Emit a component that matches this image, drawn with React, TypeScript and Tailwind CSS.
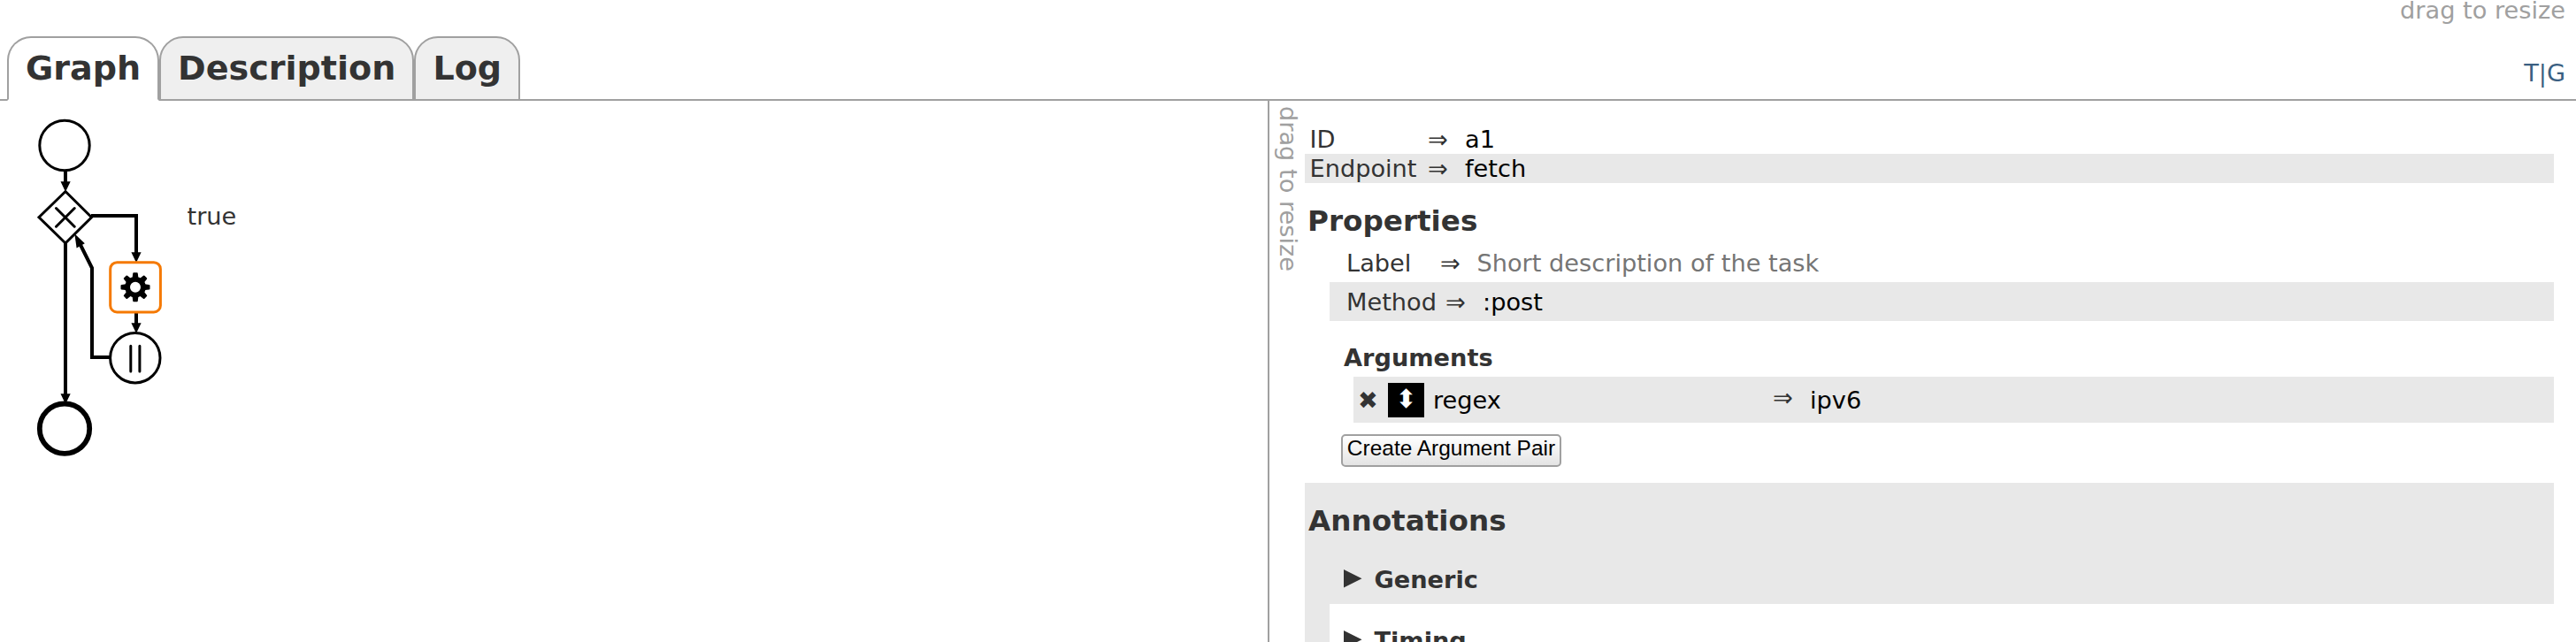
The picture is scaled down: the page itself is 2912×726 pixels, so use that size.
import React from "react";

const TEETH = [0, 45, 90, 135, 180, 225, 270, 315];

function Tab({ label, active = false }: { label: string; active?: boolean }) {
  return (
    <div
      className={
        "box-border h-[73px] rounded-t-[27px] border-2 px-[19px] pt-[11px] text-[38.08px] leading-[46px] font-bold text-[#333] border-[#a0a0a0] " +
        (active ? "border-b-white bg-white" : "bg-[#efefef]")
      }
    >
      {label}
    </div>
  );
}

function Graph() {
  return (
    <svg width="400" height="500" viewBox="0 114 400 500" className="block" fill="none" stroke="#000">
      <g strokeWidth="4">
        <path d="M74 192V208" />
        <path d="M74 274V448" />
        <path d="M103 244H154V288" />
        <path d="M154 354V368" />
        <path d="M125 404H104V303L89 273" />
      </g>
      <g fill="#000" stroke="none">
        <path d="M68.5 205.3H79.7L74 217Z" />
        <path d="M68.5 445.3H79.7L74 457Z" />
        <path d="M148.4 285.3H159.6L154 297Z" />
        <path d="M148.4 365.3H159.6L154 377Z" />
        <path d="M84.3 264.3L86.6 280.4L95.8 275.2Z" />
      </g>
      <circle cx="73" cy="164.5" r="28.2" fill="#fff" strokeWidth="3" />
      <path d="M74 216.5L103.5 245.7L74 275L44 245.7Z" fill="#fff" strokeWidth="3" />
      <path d="M63.5 235.5L84.2 256.2M84.2 235.5L63.5 256.2" strokeWidth="3" strokeLinecap="round" />
      <rect x="124.7" y="296.7" width="56.7" height="56.3" rx="7.5" fill="#fff" stroke="#f57900" strokeWidth="3" />
      <g fill="#000" stroke="none">
        {TEETH.map((a) => (
          <path key={a} d="M150.2 309.2Q150.2 308.2 151.2 308.2H154.8Q155.8 308.2 155.8 309.2L156.6 316H149.4Z" transform={`rotate(${a} 153 324.7)`} />
        ))}
      </g>
      <circle cx="153" cy="324.7" r="8.9" strokeWidth="5.8" />
      <circle cx="152.8" cy="404.7" r="28.2" fill="#fff" strokeWidth="3" />
      <path d="M147.8 391.2V420M157.9 391.2V420" strokeWidth="3" strokeLinecap="round" />
      <circle cx="73" cy="484.7" r="28.2" fill="#fff" strokeWidth="5.8" />
      <text x="211.5" y="254" fill="#333" stroke="none" className="text-[27.2px]">true</text>
    </svg>
  );
}

function Marker() {
  return (
    <svg width="21" height="21" viewBox="0 0 21 21" className="block">
      <path d="M0 0L20.5 10.3L0 20.6Z" fill="#333" />
    </svg>
  );
}

export default function App() {
  return (
    <div className="flex h-[726px] w-[2912px] flex-col overflow-hidden bg-white font-['DejaVu_Sans',sans-serif] text-[27.2px] leading-[33px] text-[#333]">
      <div className="-mt-[5px] flex h-[33px] shrink-0 justify-end pr-[12px] text-[#a0a0a0]">drag to resize</div>
      <div className="flex h-[86px] shrink-0 items-end">
        <div className="w-2 border-b-2 border-[#a0a0a0]" />
        <Tab label="Graph" active />
        <Tab label="Description" />
        <Tab label="Log" />
        <div className="flex h-[72px] flex-1 justify-end border-b-2 border-[#a0a0a0] pt-[24px] pr-[12px] text-[#3a5f82]">T|G</div>
      </div>

      <div className="flex min-h-0 flex-1">
        <div className="w-[1433px] shrink-0">
          <Graph />
        </div>
        <div className="flex w-[40px] shrink-0 flex-col justify-end border-l-2 border-[#a0a0a0] pt-[6px] pl-[5px] text-[#a0a0a0] [writing-mode:vertical-rl]">
          <span>drag to resize</span>
        </div>
        <div className="ml-[2px] w-[1412px] shrink-0 pt-[27px]">
          <div className="flex h-[33px] pl-[5.5px]">
            <span className="w-[133.5px]">ID</span>
            <span className="w-[42px]">⇒</span>
            <span className="text-black">a1</span>
          </div>
          <div className="flex h-[33px] bg-[#e8e8e8] pl-[5.5px]">
            <span className="w-[133.5px]">Endpoint</span>
            <span className="w-[42px]">⇒</span>
            <span className="text-black">fetch</span>
          </div>
          <h2 className="mt-[23px] h-[45px] pl-[3px] text-[32.64px] leading-[40px] font-bold">Properties</h2>
          <div className="ml-[28px] flex h-[44px] pl-[19px] leading-[46px]">
            <span className="w-[106px]">Label</span>
            <span className="w-[41.5px]">⇒</span>
            <span className="text-[#757575]">Short description of the task</span>
          </div>
          <div className="ml-[28px] flex h-[44px] bg-[#e8e8e8] pl-[19px] leading-[46px]">
            <span className="w-[112px]">Method</span>
            <span className="w-[42px]">⇒</span>
            <span className="text-black">:post</span>
          </div>
          <h3 className="mt-[25px] h-[38px] pl-[44px] font-bold">Arguments</h3>
          <div className="ml-[55px] flex h-[52px] bg-[#e8e8e8] leading-[53px]">
            <span className="w-[39px] pl-[5px]">✖</span>
            <span className="mt-[7px] mr-[10px] h-[39px] w-[41px] bg-black text-center text-[29px] leading-[37px] text-white">⬍</span>
            <span className="w-[384px] text-black">regex</span>
            <span className="w-[42px] leading-[48px]">⇒</span>
            <span className="text-black">ipv6</span>
          </div>
          <button className="mt-[13px] ml-[41px] block h-[37px] w-[249px] rounded-[5px] border-2 border-[#a0a0a0] bg-linear-to-b from-white to-[#e4e4e4] pb-[5px] font-['Liberation_Sans',sans-serif] text-[24.48px] leading-[28px] whitespace-nowrap text-black">Create Argument Pair</button>
          <div className="mt-[18px] h-[180px] bg-[#e8e8e8] pt-[23px]">
            <h2 className="h-[70px] pl-[4px] text-[32.64px] leading-[40px] font-bold">Annotations</h2>
            <div className="flex h-[44px] items-start pl-[44px] font-bold">
              <div className="mt-[5px] w-[34.5px]"><Marker /></div>
              Generic
            </div>
            <div className="ml-[28px] flex h-[43px] items-start bg-white pt-[25px] pl-[16px] font-bold">
              <div className="mt-[5px] w-[34.5px]"><Marker /></div>
              Timing
            </div>
          </div>
        </div>
      </div>
    </div>
  );
}
